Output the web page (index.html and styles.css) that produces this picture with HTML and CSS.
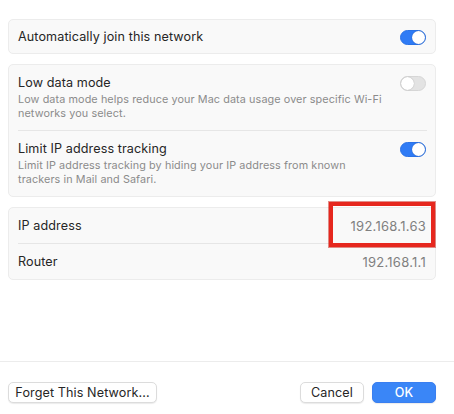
FILE: index.html
```html
<!DOCTYPE html>
<html lang="en">
<head>
<meta charset="utf-8">
<link rel="stylesheet" href="styles.css">
</head>
<body>
<div class="dialog">
  <div class="content">
    <div class="card">
      <div class="row row-center">
        <div class="label">Automatically join this network</div>
        <span class="toggle on"></span>
      </div>
    </div>
    <div class="card">
      <div class="row row-top">
        <div class="text">
          <div class="label">Low data mode</div>
          <div class="desc">Low data mode helps reduce your Mac data usage over specific Wi-Fi networks you select.</div>
        </div>
        <span class="toggle"></span>
      </div>
      <div class="sep"></div>
      <div class="row row-top">
        <div class="text">
          <div class="label">Limit IP address tracking</div>
          <div class="desc">Limit IP address tracking by hiding your IP address from known trackers in Mail and Safari.</div>
        </div>
        <span class="toggle on"></span>
      </div>
    </div>
    <div class="card card-info">
      <div class="row row-info">
        <div class="label">IP address</div>
        <div class="value">192.168.1.63</div>
      </div>
      <div class="sep"></div>
      <div class="row row-info">
        <div class="label">Router</div>
        <div class="value">192.168.1.1</div>
      </div>
      <span class="mark"></span>
    </div>
  </div>
  <div class="footer">
    <button class="btn btn-forget">Forget This Network...</button>
    <div class="spacer"></div>
    <button class="btn btn-cancel">Cancel</button>
    <button class="btn btn-primary">OK</button>
  </div>
</div>
</body>
</html>
```

FILE: styles.css
```css
* { box-sizing: border-box; }
html, body {
  margin: 0;
  padding: 0;
  background: #ffffff;
}
body {
  font-family: Inter, "Liberation Sans", sans-serif;
  color: #262626;
  width: 454px;
  height: 414px;
  overflow: hidden;
}
.dialog {
  height: 414px;
  display: flex;
  flex-direction: column;
}
.content {
  padding: 19px 18px 0 8px;
  display: flex;
  flex-direction: column;
  gap: 10px;
  flex: 1;
}
.card {
  background: #f9f9f9;
  border: 1px solid #ececec;
  border-radius: 5px;
  width: 428px;
}
.card-info {
  position: relative;
}
.row {
  display: flex;
  justify-content: space-between;
  padding: 0 9px;
}
.row-center {
  align-items: center;
  height: 33px;
}
.row-top {
  align-items: flex-start;
  padding-top: 10px;
  padding-bottom: 9px;
}
.row-info {
  align-items: center;
  height: 35px;
}
.label {
  font-size: 12.6px;
  line-height: 16px;
  color: #262626;
  letter-spacing: 0.1px;
}
.desc {
  font-size: 10.8px;
  line-height: 14px;
  color: #8b8b8b;
  margin-top: 2px;
  width: 370px;
  letter-spacing: 0.1px;
}
.sep {
  height: 1px;
  background: #e6e6e6;
  margin: 0 8px 0 9px;
}
.toggle {
  position: relative;
  flex: none;
  width: 26px;
  height: 15px;
  border-radius: 8px;
  background: #e3e3e3;
  border: 1px solid #d6d6d6;
  margin-top: 1px;
}
.row-center .toggle { margin-top: 2px; }
.toggle::after {
  content: "";
  position: absolute;
  top: 0;
  left: 0;
  width: 13px;
  height: 13px;
  border-radius: 50%;
  background: #ffffff;
  box-shadow: 0 0 1px rgba(0,0,0,0.35);
}
.toggle.on {
  background: #2f7bf5;
  border-color: #2a72e6;
}
.toggle.on::after {
  left: 11px;
}
.value {
  font-size: 13px;
  color: #808080;
  letter-spacing: 0.25px;
}
.mark {
  position: absolute;
  left: 320px;
  top: -6px;
  width: 106px;
  height: 45px;
  border: 4px solid #e6271e;
  outline: 1px solid rgba(200, 30, 20, 0.5);
}
.footer {
  border-top: 1px solid #ececec;
  height: 53px;
  display: flex;
  align-items: flex-start;
  padding: 20px 18px 0 8px;
  gap: 8px;
}
.spacer { flex: 1; }
.btn {
  font-family: Inter, "Liberation Sans", sans-serif;
  font-size: 12.6px;
  color: #262626;
  background: #ffffff;
  border: 1px solid #dcdcdc;
  border-radius: 5px;
  height: 21px;
  padding: 0 9px;
  box-shadow: 0 1px 1px rgba(0,0,0,0.08);
  letter-spacing: 0.1px;
}
.btn-forget {
  width: 149px;
  padding: 0;
}
.btn-cancel {
  width: 64px;
}
.btn-primary {
  width: 64px;
  background: #3a86f7;
  border-color: #3a7ff0;
  color: #ffffff;
  font-weight: 500;
}
```
